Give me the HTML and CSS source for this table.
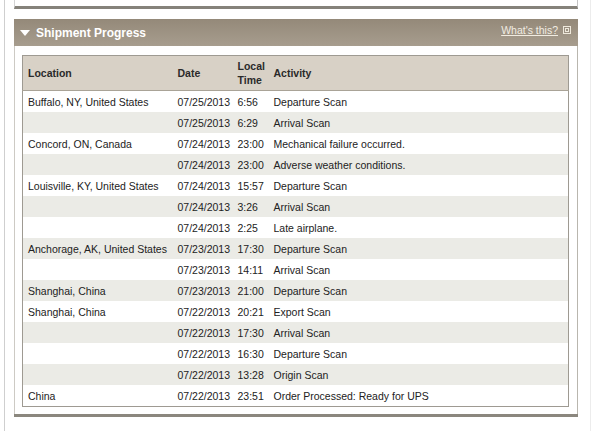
FILE: index.html
```html
<!DOCTYPE html>
<html>
<head>
<meta charset="utf-8">
<link rel="stylesheet" href="styles.css">
</head>
<body>
<div class="page">
  <div class="prev-panel"></div>
  <div class="panel">
    <div class="panel-head">
      <div class="title"><span class="tri"></span>Shipment Progress</div>
      <div class="help"><a href="#">What's this?</a><svg class="help-ico" width="8" height="8" viewBox="0 0 8 8"><rect x="0.5" y="0.5" width="7" height="7" fill="none" stroke="#efe9dc" stroke-width="1"/><rect x="2.5" y="2.5" width="3" height="3" fill="none" stroke="#efe9dc" stroke-width="1"/></svg></div>
    </div>
    <div class="panel-body">
      <table class="progress">
        <colgroup><col class="c-loc"><col class="c-date"><col class="c-time"><col class="c-act"></colgroup>
        <thead>
          <tr><th>Location</th><th>Date</th><th>Local<br>Time</th><th>Activity</th></tr>
        </thead>
        <tbody>
          <tr><td>Buffalo, NY, United States</td><td>07/25/2013</td><td>6:56</td><td>Departure Scan</td></tr>
          <tr><td></td><td>07/25/2013</td><td>6:29</td><td>Arrival Scan</td></tr>
          <tr><td>Concord, ON, Canada</td><td>07/24/2013</td><td>23:00</td><td>Mechanical failure occurred.</td></tr>
          <tr><td></td><td>07/24/2013</td><td>23:00</td><td>Adverse weather conditions.</td></tr>
          <tr><td>Louisville, KY, United States</td><td>07/24/2013</td><td>15:57</td><td>Departure Scan</td></tr>
          <tr><td></td><td>07/24/2013</td><td>3:26</td><td>Arrival Scan</td></tr>
          <tr><td></td><td>07/24/2013</td><td>2:25</td><td>Late airplane.</td></tr>
          <tr><td>Anchorage, AK, United States</td><td>07/23/2013</td><td>17:30</td><td>Departure Scan</td></tr>
          <tr><td></td><td>07/23/2013</td><td>14:11</td><td>Arrival Scan</td></tr>
          <tr><td>Shanghai, China</td><td>07/23/2013</td><td>21:00</td><td>Departure Scan</td></tr>
          <tr><td>Shanghai, China</td><td>07/22/2013</td><td>20:21</td><td>Export Scan</td></tr>
          <tr><td></td><td>07/22/2013</td><td>17:30</td><td>Arrival Scan</td></tr>
          <tr><td></td><td>07/22/2013</td><td>16:30</td><td>Departure Scan</td></tr>
          <tr><td></td><td>07/22/2013</td><td>13:28</td><td>Origin Scan</td></tr>
          <tr><td>China</td><td>07/22/2013</td><td>23:51</td><td>Order Processed: Ready for UPS</td></tr>
        </tbody>
      </table>
    </div>
  </div>
</div>
</body>
</html>
```

FILE: styles.css
```css
html, body {
  margin: 0;
  padding: 0;
  background: #fff;
}
body {
  font-family: "Liberation Sans", Arial, sans-serif;
  color: #222;
}
.page {
  margin-left: 4px;
  width: 587px;
  height: 432px;
  box-sizing: border-box;
  border-left: 1px solid #cfcfcf;
  border-right: 1px solid #ececec;
  padding: 0 12px 0 9px;
}
.prev-panel {
  height: 7px;
  border-left: 1px solid #d4d4d4;
  border-right: 1px solid #c4c4c4;
  border-bottom: 3px solid #85827a;
  background: #fff;
  margin-top: -1px;
}
.panel {
  margin-top: 10px;
  border-bottom: 3px solid #8b877e;
}
.panel-head {
  height: 27px;
  display: flex;
  align-items: center;
  justify-content: space-between;
  background: linear-gradient(#948979, #a79d8e);
  padding: 0 7px 0 6px;
}
.title {
  display: flex;
  align-items: center;
  color: #fff;
  font-weight: bold;
  font-size: 12px;
  margin-top: 1px;
}
.tri {
  width: 0;
  height: 0;
  border-left: 5px solid transparent;
  border-right: 5px solid transparent;
  border-top: 6px solid #fff;
  margin-right: 6px;
}
.help {
  display: flex;
  align-items: center;
  gap: 5px;
  margin-top: -6px;
}
.help a {
  color: #f1ece1;
  font-size: 10.5px;
  text-decoration: underline;
}
.panel-body {
  background: #fff;
  border-left: 1px solid #cdcac4;
  border-right: 1px solid #b9b6ae;
  padding: 9px 8px 7px 7px;
}
.progress {
  width: 100%;
  table-layout: fixed;
  border-collapse: collapse;
  border: 1px solid #9e9a92;
  font-size: 10.5px;
}
.c-loc { width: 150px; }
.c-date { width: 60px; }
.c-time { width: 36px; }
.progress th {
  background: #d8d1c6;
  color: #2a2a2a;
  text-align: left;
  font-weight: bold;
  height: 35px;
  padding: 0 0 0 5px;
  line-height: 14px;
  border-bottom: 1px solid #a9a397;
  box-sizing: border-box;
}
.progress td {
  height: 21px;
  padding: 0 0 0 5px;
  white-space: nowrap;
  color: #222;
}
.progress tbody tr:nth-child(even) td {
  background: #ebebe6;
}
```
